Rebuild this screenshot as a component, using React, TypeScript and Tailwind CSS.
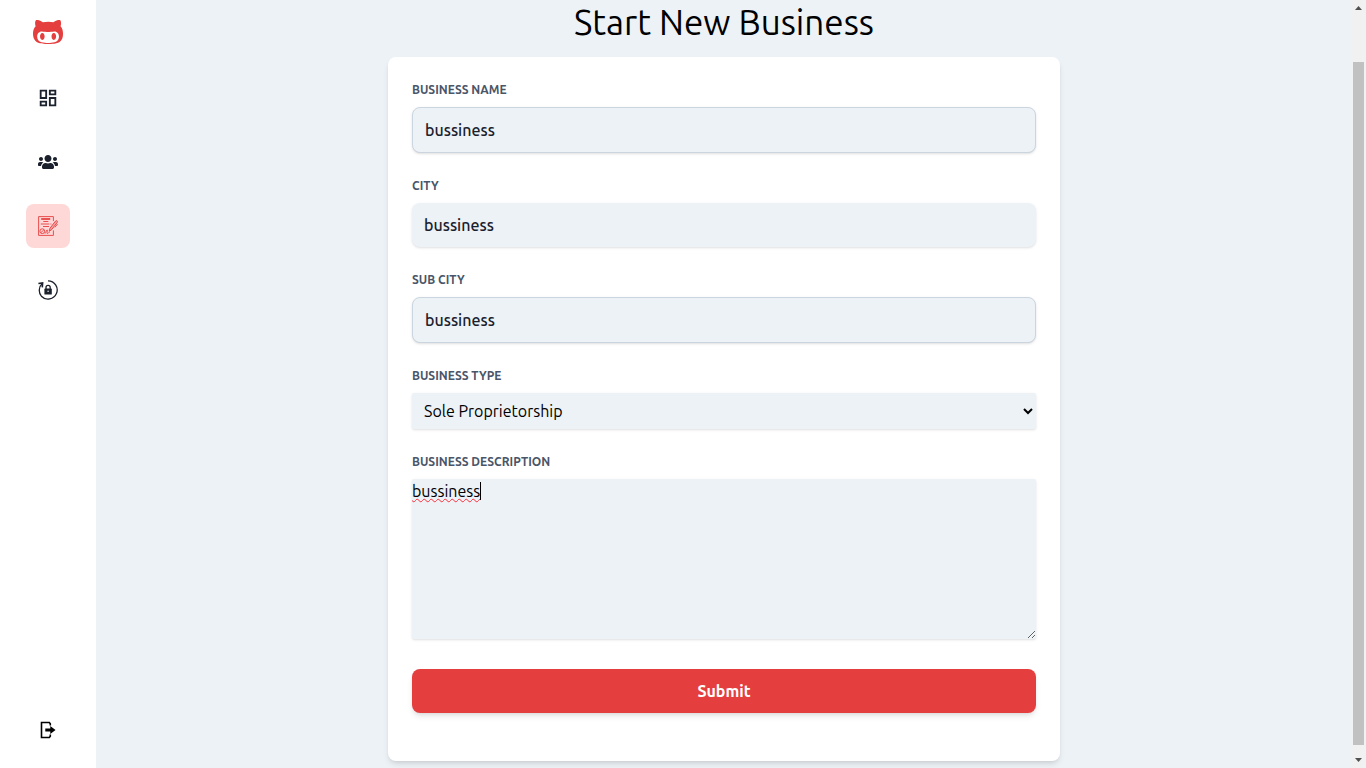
import { useState } from "react";
import type { ReactNode } from "react";
import { FaGithubAlt, FaUsers } from "react-icons/fa";
import { MdOutlineDashboard } from "react-icons/md";

function ContractIcon() {
  return (
    <svg viewBox="0 0 20 20" className="size-5" fill="none" stroke="currentColor" strokeWidth="0.9" aria-hidden="true">
      <path d="M15.4 5V.6H.6v18.8h14.8v-5" />
      <path d="M3.2 3h9" strokeWidth="1.7" />
      <path d="M5.3 5.5h5M2.8 8h8.5M12.4 8h1M5 10.5h6" />
      <circle cx="4.3" cy="15.2" r="2.4" />
      <path d="M3 16.5l2.8-2.6M7 17.6c1.2-1.5 1.6-4.3 2.3-3.6s-1.2 3.6.2 3.4 1.2-1.3 2.1-1.4" />
      <path d="M11.2 15.2l.8-3L17.6 5c.8-1 2.4.2 1.7 1.3L13.6 13.7z" fill="currentColor" fillOpacity="0.35" />
      <path d="M19.5 8l-2.6 3.4" />
    </svg>
  );
}

function LockResetIcon() {
  return (
    <svg viewBox="0 0 20 20" className="size-5" fill="none" stroke="currentColor" strokeWidth="1.3" aria-hidden="true">
      <path d="M10 .9a9.1 9.1 0 1 1-6.6 15.3A9.1 9.1 0 0 1 4.3 3.6" />
      <path d="M.4 3.5L4.6 3 4.3 7.4" strokeWidth="1.6" />
      <rect x="6.4" y="8.6" width="7.4" height="6" rx="0.6" fill="currentColor" stroke="none" />
      <path d="M8 9V7.5a2.1 2.1 0 0 1 4.2 0V9" />
      <circle cx="10.1" cy="11.3" r="0.7" fill="white" stroke="none" />
    </svg>
  );
}

function ExitIcon() {
  return (
    <svg viewBox="0 0 16 18" className="h-[18px] w-4" fill="none" stroke="currentColor" aria-hidden="true">
      <path
        d="M10.3 4.6V2.8L9.3 1.5H1.5V16.5H9.300L10.300 15.200V13.400"
        strokeWidth="1.600"
      />
      <path d="M5.300 7.500h5V5L15.500 9l-5.200 4v-2.500h-5z" fill="currentColor" stroke="none" />
    </svg>
  );
}

function NavItem({ label, active = false, children }: { label: string; active?: boolean; children: ReactNode }) {
  return (
    <li>
      <a
        href="#"
        aria-label={label}
        aria-current={active ? "page" : undefined}
        className={
          active
            ? "flex size-11 items-center justify-center rounded-lg bg-[#fed7d7] text-[#e53e3e]"
            : "flex size-11 items-center justify-center rounded-lg text-[#1a202c]"
        }
      >
        {children}
      </a>
    </li>
  );
}

function Field({ id, label, children }: { id: string; label: string; children: ReactNode }) {
  return (
    <div>
      <label htmlFor={id} className="mb-2 block text-xs leading-[18px] font-bold uppercase text-[#4a5568]">
        {label}
      </label>
      {children}
    </div>
  );
}

function ScrollRail() {
  return (
    <div
      aria-hidden="true"
      className="flex w-3.5 shrink-0 flex-col items-center bg-[#f1f1f1] py-1.5 pr-px text-[#505050]"
    >
      <svg viewBox="0 0 7 4" className="h-1 w-[7px]" fill="currentColor">
        <path d="M3.5 0L7 4H0z" />
      </svg>
      <div className="mt-[52px] mb-[13px] w-[11px] flex-1 bg-[#c1c1c1]" />
      <svg viewBox="0 0 7 4" className="h-1 w-[7px]" fill="currentColor">
        <path d="M0 0h7L3.5 4z" />
      </svg>
    </div>
  );
}

const inputBase =
  "block w-full rounded-lg bg-[#edf2f7] p-3 text-base leading-5 font-medium text-[#1a202c] shadow-sm outline-none";

export default function App() {
  const [name, setName] = useState("bussiness");
  const [city, setCity] = useState("bussiness");
  const [subCity, setSubCity] = useState("bussiness");
  const [description, setDescription] = useState("bussiness");

  return (
    <div className="flex h-screen overflow-hidden bg-[#edf2f7] font-[Ubuntu,'Noto_Sans',sans-serif] text-black">
      <nav aria-label="Main" className="flex w-24 shrink-0 flex-col items-center justify-between bg-white py-4">
        <div className="flex flex-col items-center">
          <a href="#" aria-label="Home" className="mb-7 text-[#e53e3e]">
            <FaGithubAlt size={32} />
          </a>
          <ul className="flex flex-col gap-5">
            <NavItem label="Dashboard">
              <MdOutlineDashboard size={22} />
            </NavItem>
            <NavItem label="Users">
              <FaUsers size={20} />
            </NavItem>
            <NavItem label="New business" active>
              <ContractIcon />
            </NavItem>
            <NavItem label="Reset password">
              <LockResetIcon />
            </NavItem>
          </ul>
        </div>
        <button type="button" aria-label="Log out" className="flex size-11 items-center justify-center">
          <ExitIcon />
        </button>
      </nav>

      <main className="flex flex-1 flex-col items-center overflow-hidden px-6">
        <h1 className="mt-0.5 mb-[15px] text-[35px] leading-10">Start New Business</h1>
        <form
          onSubmit={(event) => event.preventDefault()}
          className="flex w-full max-w-2xl shrink-0 flex-col gap-6 rounded-lg bg-white px-6 pt-6 pb-12 shadow-md"
        >
          <Field id="name" label="Business name">
            <input
              id="name"
              value={name}
              onChange={(event) => setName(event.target.value)}
              className={`${inputBase} border border-[#cbd5e0]`}
            />
          </Field>
          <Field id="city" label="City">
            <input
              id="city"
              value={city}
              onChange={(event) => setCity(event.target.value)}
              className={inputBase}
            />
          </Field>
          <Field id="sub-city" label="Sub city">
            <input
              id="sub-city"
              value={subCity}
              onChange={(event) => setSubCity(event.target.value)}
              className={`${inputBase} border border-[#cbd5e0]`}
            />
          </Field>
          <Field id="type" label="Business type">
            <select
              id="type"
              className="block h-9 w-full rounded-xs bg-[#edf2f7] px-2 text-base shadow-sm outline-none"
            >
              <option>Sole Proprietorship</option>
              <option>Partnership</option>
              <option>Corporation</option>
            </select>
          </Field>
          <Field id="description" label="Business description">
            <div className="relative">
              <textarea
                id="description"
                value={description}
                onChange={(event) => setDescription(event.target.value)}
                spellCheck={false}
                className="block h-40 w-full resize rounded-xs bg-[#edf2f7] text-base leading-6 caret-transparent shadow-sm outline-none"
              />
              <span
                aria-hidden="true"
                className="pointer-events-none absolute top-[3px] left-0 h-[18px] border-r border-black text-base leading-[18px] text-transparent underline decoration-red-500 decoration-wavy decoration-1"
              >
                {description}
              </span>
            </div>
          </Field>
          <button type="submit" className="mt-1.5 h-11 rounded-lg bg-[#e53e3e] text-base font-bold text-white shadow-md">
            Submit
          </button>
        </form>
      </main>
      <ScrollRail />
    </div>
  );
}
